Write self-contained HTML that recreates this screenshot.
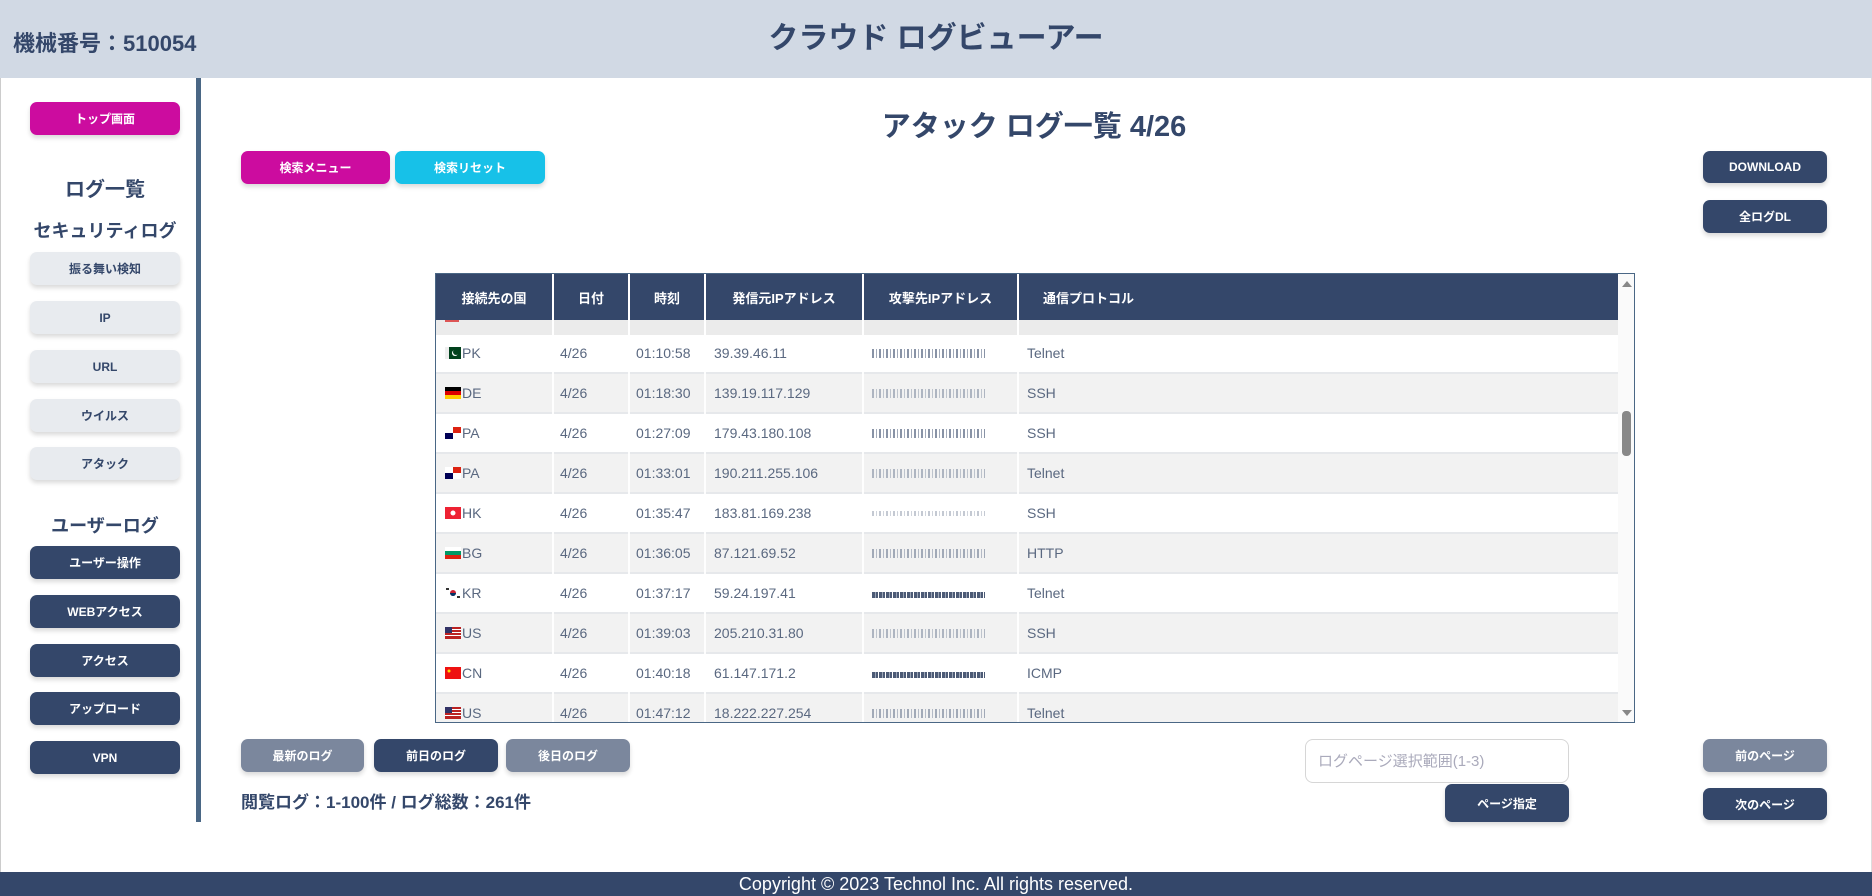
<!DOCTYPE html>
<html><head><meta charset="utf-8"><style>
*{box-sizing:border-box;margin:0;padding:0}
body{width:1872px;height:896px;position:relative;background:#fff;font-family:"Liberation Sans","Noto Sans CJK JP",sans-serif;color:#34476a;overflow:hidden}
.a{position:absolute}
.hdr{left:0;top:0;width:1872px;height:78px;background:#d1d9e4}
.btn{position:absolute;border-radius:7px;color:#fff;font-size:12px;font-weight:bold;display:flex;align-items:center;justify-content:center;box-shadow:0 3px 5px rgba(0,0,0,.15)}
.nv{background:#34476a}.mg{background:#cc0c9f}.cy{background:#17c1e8}.gy{background:#7b879d}
.lt{background:#e8ebef;color:#34476a}
.sb{left:30px;width:150px;height:33px}
.tbl{left:435px;top:273px;width:1200px;height:450px;border:1px solid #4a6785;overflow:hidden;background:#fff}
.row{position:absolute;left:0;width:1182px;height:40px;border-bottom:2px solid #e6e8eb}
.c{position:absolute;top:0;height:38px;display:flex;align-items:center;font-size:14px;color:#5a6880}
.g{background:#f2f2f2}
.th{position:absolute;top:0;height:46px;background:#34476a;color:#fff;font-size:13px;font-weight:bold;display:flex;align-items:center;justify-content:center}
.ip{width:113px;height:9px;background:repeating-linear-gradient(90deg,#6b7890 0 2px,transparent 2px 4px,#8a95a8 4px 5px,transparent 5px 7px);opacity:.8}
.ipd{width:113px;height:9px;background:repeating-linear-gradient(90deg,#4c5a75 0 3px,#9aa4b5 3px 4px,#4c5a75 4px 6px,transparent 6px 7px);-webkit-mask:linear-gradient(#0000 0 3px,#000 3px)}
svg{margin-right:1px}
</style></head><body>
<div class="a hdr"></div>
<div class="a" style="left:13px;top:26px;font-size:22px;font-weight:bold">機械番号：510054</div>
<div class="a" style="left:0;width:1872px;top:13px;text-align:center;font-size:30px;font-weight:bold">クラウド ログビューアー</div>
<div class="a" style="left:0;top:78px;width:1px;height:794px;background:#ccc"></div>
<div class="a" style="left:1871px;top:78px;width:1px;height:794px;background:#ddd"></div>
<div class="a" style="left:196px;top:78px;width:5px;height:744px;background:#4a6785"></div>

<div class="btn mg sb" style="top:102px">トップ画面</div>
<div class="a" style="left:30px;width:150px;top:173px;text-align:center;font-size:20px;font-weight:bold">ログ一覧</div>
<div class="a" style="left:15px;width:180px;top:217px;text-align:center;font-size:18px;font-weight:bold">セキュリティログ</div>
<div class="btn lt sb" style="top:252px">振る舞い検知</div>
<div class="btn lt sb" style="top:301px">IP</div>
<div class="btn lt sb" style="top:350px">URL</div>
<div class="btn lt sb" style="top:399px">ウイルス</div>
<div class="btn lt sb" style="top:447px">アタック</div>
<div class="a" style="left:15px;width:180px;top:512px;text-align:center;font-size:18px;font-weight:bold">ユーザーログ</div>
<div class="btn nv sb" style="top:546px">ユーザー操作</div>
<div class="btn nv sb" style="top:595px">WEBアクセス</div>
<div class="btn nv sb" style="top:644px">アクセス</div>
<div class="btn nv sb" style="top:692px">アップロード</div>
<div class="btn nv sb" style="top:741px">VPN</div>

<div class="a" style="left:196px;width:1676px;top:103px;text-align:center;font-size:29px;font-weight:bold">アタック ログ一覧 4/26</div>
<div class="btn mg" style="left:241px;top:151px;width:149px;height:33px">検索メニュー</div>
<div class="btn cy" style="left:395px;top:151px;width:150px;height:33px">検索リセット</div>
<div class="btn nv" style="left:1703px;top:151px;width:124px;height:32px">DOWNLOAD</div>
<div class="btn nv" style="left:1703px;top:200px;width:124px;height:33px">全ログDL</div>

<div class="a tbl">
<div class="th" style="left:0;width:116px">接続先の国</div>
<div class="th" style="left:118px;width:74px">日付</div>
<div class="th" style="left:194px;width:74px">時刻</div>
<div class="th" style="left:270px;width:156px">発信元IPアドレス</div>
<div class="th" style="left:428px;width:153px">攻撃先IPアドレス</div>
<div class="th" style="left:583px;width:599px;justify-content:flex-start;padding-left:24px">通信プロトコル</div>
<div class="a" style="left:0;top:46px;width:1182px;height:15px;background:linear-gradient(90deg,#ebebeb 0 116px,#fff 116px 118px,#ebebeb 118px 192px,#fff 192px 194px,#ebebeb 194px 268px,#fff 268px 270px,#ebebeb 270px 426px,#fff 426px 428px,#ebebeb 428px 581px,#fff 581px 583px,#ebebeb 583px)"><div class="a" style="left:9px;top:0;width:14px;height:2px;background:#d55"></div></div>
<div class="a" style="left:1182px;top:0;width:17px;height:450px;background:#fafafa"></div>
<div class="a" style="left:1186px;top:7px;width:0;height:0;border-left:5px solid transparent;border-right:5px solid transparent;border-bottom:6px solid #888"></div>
<div class="a" style="left:1186px;top:436px;width:0;height:0;border-left:5px solid transparent;border-right:5px solid transparent;border-top:6px solid #888"></div>
<div class="a" style="left:1186px;top:137px;width:9px;height:45px;border-radius:4px;background:#888"></div>
</div>

<div class="btn gy" style="left:241px;top:739px;width:123px;height:33px">最新のログ</div>
<div class="btn nv" style="left:374px;top:739px;width:124px;height:33px">前日のログ</div>
<div class="btn gy" style="left:506px;top:739px;width:124px;height:33px">後日のログ</div>
<div class="a" style="left:241px;top:788px;font-size:17px;font-weight:bold">閲覧ログ：1-100件 / ログ総数：261件</div>
<div class="a" style="left:1305px;top:739px;width:264px;height:44px;border:1px solid #d6d6d6;border-radius:8px;color:#aab;font-size:15px;padding:10px 12px">ログページ選択範囲(1-3)</div>
<div class="btn nv" style="left:1445px;top:784px;width:124px;height:38px">ページ指定</div>
<div class="btn gy" style="left:1703px;top:739px;width:124px;height:33px">前のページ</div>
<div class="btn nv" style="left:1703px;top:788px;width:124px;height:32px">次のページ</div>

<div class="a" style="left:0;top:872px;width:1872px;height:24px;background:#34476a;color:#fff;font-size:18px;text-align:center;line-height:24px">Copyright © 2023 Technol Inc. All rights reserved.</div>

<div class="a" style="left:436px;top:334px;width:1182px;height:388px;overflow:hidden">
<div class="row" style="top:0"><div class="c" style="left:9px"><svg width="16" height="12"><rect width="4" height="12" fill="#eee"/><rect x="4" width="12" height="12" fill="#01411c"/><circle cx="10" cy="6" r="3" fill="#fff"/><circle cx="11" cy="5" r="3" fill="#01411c"/></svg>PK</div><div class="c" style="left:124px">4/26</div><div class="c" style="left:200px">01:10:58</div><div class="c" style="left:278px">39.39.46.11</div><div class="c" style="left:436px"><div class="ip"></div></div><div class="c" style="left:591px">Telnet</div></div>
<div class="row g" style="top:40px"><div class="c" style="left:9px"><svg width="16" height="12"><rect width="16" height="4" fill="#000"/><rect y="4" width="16" height="4" fill="#d00"/><rect y="8" width="16" height="4" fill="#fc0"/></svg>DE</div><div class="c" style="left:124px">4/26</div><div class="c" style="left:200px">01:18:30</div><div class="c" style="left:278px">139.19.117.129</div><div class="c" style="left:436px"><div class="ip" style="opacity:.5"></div></div><div class="c" style="left:591px">SSH</div></div>
<div class="row" style="top:80px"><div class="c" style="left:9px"><svg width="16" height="12"><rect width="16" height="12" fill="#fff"/><rect x="8" width="8" height="6" fill="#d21"/><rect y="6" width="8" height="6" fill="#005"/></svg>PA</div><div class="c" style="left:124px">4/26</div><div class="c" style="left:200px">01:27:09</div><div class="c" style="left:278px">179.43.180.108</div><div class="c" style="left:436px"><div class="ip"></div></div><div class="c" style="left:591px">SSH</div></div>
<div class="row g" style="top:120px"><div class="c" style="left:9px"><svg width="16" height="12"><rect width="16" height="12" fill="#fff"/><rect x="8" width="8" height="6" fill="#d21"/><rect y="6" width="8" height="6" fill="#005"/></svg>PA</div><div class="c" style="left:124px">4/26</div><div class="c" style="left:200px">01:33:01</div><div class="c" style="left:278px">190.211.255.106</div><div class="c" style="left:436px"><div class="ip" style="opacity:.5"></div></div><div class="c" style="left:591px">Telnet</div></div>
<div class="row" style="top:160px"><div class="c" style="left:9px"><svg width="16" height="12"><rect width="16" height="12" fill="#e23"/><circle cx="8" cy="6" r="2.5" fill="#fff"/></svg>HK</div><div class="c" style="left:124px">4/26</div><div class="c" style="left:200px">01:35:47</div><div class="c" style="left:278px">183.81.169.238</div><div class="c" style="left:436px"><div class="ip" style="opacity:.4;height:5px"></div></div><div class="c" style="left:591px">SSH</div></div>
<div class="row g" style="top:200px"><div class="c" style="left:9px"><svg width="16" height="12"><rect width="16" height="4" fill="#fff"/><rect y="4" width="16" height="4" fill="#096"/><rect y="8" width="16" height="4" fill="#d21"/></svg>BG</div><div class="c" style="left:124px">4/26</div><div class="c" style="left:200px">01:36:05</div><div class="c" style="left:278px">87.121.69.52</div><div class="c" style="left:436px"><div class="ip" style="opacity:.6"></div></div><div class="c" style="left:591px">HTTP</div></div>
<div class="row" style="top:240px"><div class="c" style="left:9px"><svg width="16" height="12"><rect width="16" height="12" fill="#fff"/><circle cx="8" cy="6" r="3" fill="#c23"/><path d="M5 6a3 3 0 0 0 6 0z" fill="#036"/><rect x="1" y="1" width="3" height="2" fill="#333"/><rect x="12" y="9" width="3" height="2" fill="#333"/></svg>KR</div><div class="c" style="left:124px">4/26</div><div class="c" style="left:200px">01:37:17</div><div class="c" style="left:278px">59.24.197.41</div><div class="c" style="left:436px"><div class="ipd"></div></div><div class="c" style="left:591px">Telnet</div></div>
<div class="row g" style="top:280px"><div class="c" style="left:9px"><svg width="16" height="12"><rect width="16" height="12" fill="#b22"/><rect y="2" width="16" height="1" fill="#fff"/><rect y="5" width="16" height="1" fill="#fff"/><rect y="8" width="16" height="1" fill="#fff"/><rect width="7" height="6" fill="#336"/></svg>US</div><div class="c" style="left:124px">4/26</div><div class="c" style="left:200px">01:39:03</div><div class="c" style="left:278px">205.210.31.80</div><div class="c" style="left:436px"><div class="ip" style="opacity:.5"></div></div><div class="c" style="left:591px">SSH</div></div>
<div class="row" style="top:320px"><div class="c" style="left:9px"><svg width="16" height="12"><rect width="16" height="12" fill="#e11"/><circle cx="4" cy="4" r="1.5" fill="#fd0"/></svg>CN</div><div class="c" style="left:124px">4/26</div><div class="c" style="left:200px">01:40:18</div><div class="c" style="left:278px">61.147.171.2</div><div class="c" style="left:436px"><div class="ipd"></div></div><div class="c" style="left:591px">ICMP</div></div>
<div class="row g" style="top:360px"><div class="c" style="left:9px"><svg width="16" height="12"><rect width="16" height="12" fill="#b22"/><rect y="2" width="16" height="1" fill="#fff"/><rect y="5" width="16" height="1" fill="#fff"/><rect y="8" width="16" height="1" fill="#fff"/><rect width="7" height="6" fill="#336"/></svg>US</div><div class="c" style="left:124px">4/26</div><div class="c" style="left:200px">01:47:12</div><div class="c" style="left:278px">18.222.227.254</div><div class="c" style="left:436px"><div class="ip" style="opacity:.6"></div></div><div class="c" style="left:591px">Telnet</div></div>
</div>
<div class="a" style="left:552px;top:334px;width:2px;height:388px;background:rgba(255,255,255,.9)"></div>
<div class="a" style="left:628px;top:334px;width:2px;height:388px;background:rgba(255,255,255,.9)"></div>
<div class="a" style="left:704px;top:334px;width:2px;height:388px;background:rgba(255,255,255,.9)"></div>
<div class="a" style="left:862px;top:334px;width:2px;height:388px;background:rgba(255,255,255,.9)"></div>
<div class="a" style="left:1017px;top:334px;width:2px;height:388px;background:rgba(255,255,255,.9)"></div>
</body></html>
